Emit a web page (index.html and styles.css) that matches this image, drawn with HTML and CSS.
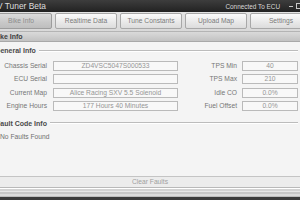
FILE: index.html
```html
<!DOCTYPE html>
<html>
<head>
<meta charset="utf-8">
<link rel="stylesheet" href="styles.css">
</head>
<body>
<div class="window">
  <div class="titlebar">
    <span class="title">V Tuner Beta</span>
    <span class="status">Connected To ECU</span>
    <span class="min"></span>
    <span class="max"></span>
  </div>
  <div class="tabbar">
    <div class="tab active">Bike Info</div>
    <div class="tab">Realtime Data</div>
    <div class="tab">Tune Constants</div>
    <div class="tab">Upload Map</div>
    <div class="tab">Settings</div>
  </div>
  <div class="header"><span class="header-text">Bike Info</span></div>
  <div class="content">
    <div class="group-title"><span class="legend legend-general">General Info</span></div>
    <div class="form">
      <div class="label">Chassis Serial</div>
      <div class="field">ZD4VSC5047S000533</div>
      <div class="label label-right">TPS Min</div>
      <div class="field">40</div>

      <div class="label">ECU Serial</div>
      <div class="field"></div>
      <div class="label label-right">TPS Max</div>
      <div class="field">210</div>

      <div class="label">Current Map</div>
      <div class="field">Alice Racing SXV 5.5 Solenoid</div>
      <div class="label label-right">Idle CO</div>
      <div class="field">0.0%</div>

      <div class="label">Engine Hours</div>
      <div class="field">177 Hours 40 Minutes</div>
      <div class="label label-right">Fuel Offset</div>
      <div class="field">0.0%</div>
    </div>
    <div class="group-title group-fault"><span class="legend legend-fault">Fault Code Info</span></div>
    <div class="faults">No Faults Found</div>
  </div>
  <div class="clearbar">Clear Faults</div>
  <div class="footer"></div>
</div>
</body>
</html>
```

FILE: styles.css
```css
html, body {
  margin: 0;
  padding: 0;
}
body {
  width: 300px;
  height: 200px;
  overflow: hidden;
  font-family: "Liberation Sans", Arial, sans-serif;
  background: #f4f4f4;
}
.window {
  display: flex;
  flex-direction: column;
  width: 300px;
  height: 200px;
}
.titlebar {
  height: 12px;
  flex: none;
  display: flex;
  align-items: center;
  background: linear-gradient(#3d3d3d, #222222);
  color: #e2e2e2;
  overflow: hidden;
}
.title {
  font-size: 8.4px;
  margin-left: -3px;
  white-space: nowrap;
  color: #dedede;
}
.status {
  margin-left: auto;
  font-size: 6.4px;
  color: #d8d8d8;
  white-space: nowrap;
}
.min {
  width: 4px;
  height: 1px;
  background: #c8c8c8;
  margin-left: 9px;
  margin-top: 1px;
}
.max {
  flex: none;
  width: 5px;
  height: 4px;
  border: 1px solid #c8c8c8;
  margin-left: 3px;
  margin-right: -3px;
}
.tabbar {
  height: 19px;
  flex: none;
  box-sizing: border-box;
  display: flex;
  gap: 3px;
  padding-top: 1px;
  margin-left: -10px;
  background: linear-gradient(#e4e4e4, #d9d9d9);
}
.tab {
  flex: none;
  width: 62px;
  height: 16px;
  box-sizing: border-box;
  border: 1px solid #a8a8a8;
  border-radius: 2px;
  background: linear-gradient(#fbfbfb, #e8e8e8 60%, #dcdcdc);
  color: #7a7a7a;
  font-size: 6.7px;
  line-height: 14px;
  text-align: center;
  white-space: nowrap;
  overflow: hidden;
}
.tab.active {
  background: linear-gradient(#dcdcdc, #c8c8c8 60%, #bebebe);
  color: #8c8c8c;
  border-color: #9c9c9c;
}
.header {
  height: 11px;
  flex: none;
  box-sizing: border-box;
  border-top: 1px solid #b4b4b4;
  border-bottom: 1px solid #a8a8a8;
  background: linear-gradient(#dadada, #c2c2c2);
  overflow: hidden;
}
.header-text {
  display: block;
  margin-left: -7px;
  font-size: 7px;
  font-weight: bold;
  color: #404040;
  line-height: 9px;
  white-space: nowrap;
}
.content {
  flex: 1;
  background: #f4f4f4;
  display: flex;
  flex-direction: column;
  overflow: hidden;
}
.group-title {
  display: flex;
  align-items: center;
  gap: 3px;
  height: 9px;
  margin-top: 4px;
}
.group-title::after {
  content: "";
  flex: 1;
  height: 0;
  border-top: 1px solid #bcbcbc;
  border-bottom: 1px solid #ffffff;
  margin-right: 2px;
}
.legend {
  font-size: 7px;
  font-weight: bold;
  color: #4a4a4a;
  white-space: nowrap;
  line-height: 9px;
}
.legend-general {
  margin-left: -5px;
}
.legend-fault {
  margin-left: -4px;
}
.group-fault {
  margin-top: 8px;
}
.form {
  display: grid;
  grid-template-columns: 53px 125px 64px 56px;
  grid-auto-rows: 10px;
  row-gap: 3.3px;
  margin-top: 6px;
}
.label {
  font-size: 6.7px;
  color: #767676;
  text-align: right;
  padding-right: 6px;
  line-height: 10px;
  white-space: nowrap;
}
.label-right {
  padding-right: 5px;
}
.field {
  box-sizing: border-box;
  height: 10px;
  border: 1px solid #bababa;
  background: #f8f8f8;
  color: #959595;
  font-size: 6.7px;
  line-height: 8px;
  text-align: center;
  white-space: nowrap;
  overflow: hidden;
}
.faults {
  margin-top: 4px;
  font-size: 6.7px;
  color: #707070;
  line-height: 9px;
  white-space: nowrap;
}
.clearbar {
  height: 11px;
  flex: none;
  box-sizing: border-box;
  border-top: 1px solid #c4c4c4;
  background: #ececec;
  color: #a0a0a0;
  font-size: 6.7px;
  line-height: 10px;
  text-align: center;
}
.footer {
  height: 13px;
  flex: none;
  background: linear-gradient(
    #b9b9b9 0 1px,
    #ffffff 1px 2px,
    #d2d2d2 2px 4px,
    #e6e6e6 4px 5px,
    #c6c6c6 5px 7px,
    #dadada 7px 9px,
    #bcbcbc 9px 10px,
    #3a3a3a 10px 13px
  );
}
```
